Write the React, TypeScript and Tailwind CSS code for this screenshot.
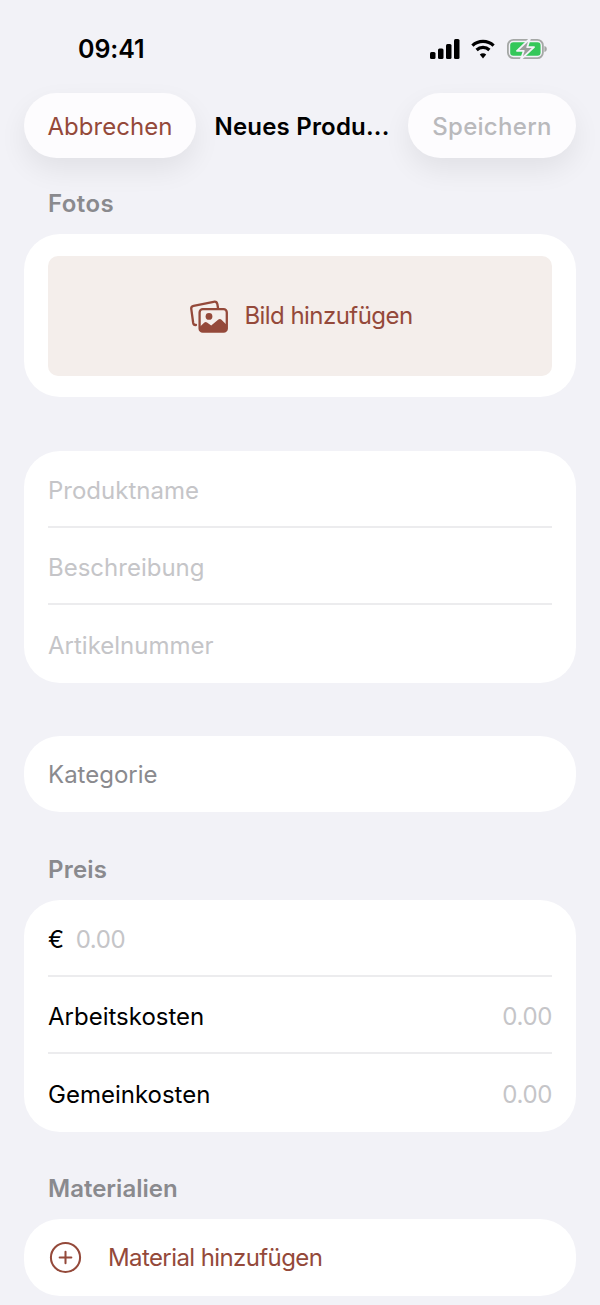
import { CirclePlus } from 'lucide-react';

function PhotosIcon() {
  return (
    <svg width="38" height="33" viewBox="0 0 38 33" fill="none">
      <path d="M6 25 H5.4 C4.2 25 3.4 24.2 3.2 23 L1.3 9.2 C1 7.4 2 6.2 3.6 5.9 L23.6 1.8 C25.6 1.4 27 2.4 27.4 4.2 L28 8" stroke="#94493a" strokeWidth="2.3" strokeLinecap="round" />
      <rect x="9.6" y="9.2" width="27.2" height="22.4" rx="3.2" stroke="#94493a" strokeWidth="2.3" />
      <circle cx="19" cy="16.4" r="3.4" fill="#94493a" />
      <path d="M9.6 27 L14.4 22.6 C15.2 21.8 16.2 21.8 17 22.6 L21.2 25.4 L28.4 19.6 C29.4 18.8 30.4 18.8 31.2 19.6 L36.8 25 V29 C36.8 30.6 35.6 31.6 34.2 31.6 H12.2 C10.6 31.6 9.6 30.6 9.6 29 Z" fill="#94493a" />
    </svg>
  );
}

function StatusIcons() {
  return (
    <div className="flex items-center">
      <svg width="30" height="20" viewBox="0 0 30 20" fill="#000">
        <rect x="0" y="13" width="5.5" height="7" rx="1.5" />
        <rect x="8" y="9.5" width="5.5" height="10.5" rx="1.5" />
        <rect x="16" y="5" width="5.5" height="15" rx="1.5" />
        <rect x="24" y="0" width="5.5" height="20" rx="1.5" />
      </svg>
      <svg className="ml-[11px]" width="24" height="20" viewBox="0 0 24 20" fill="none" stroke="#000" strokeWidth="3.2">
        <path d="M1.4 6.6 C7.4 1 16.6 1 22.6 6.6" />
        <path d="M5.6 11 C9.2 7.6 14.8 7.6 18.4 11" />
        <path d="M12 19.4 L8.8 15.4 C10.6 13.8 13.4 13.8 15.2 15.4 Z" fill="#000" stroke="none" />
      </svg>
      <svg className="ml-[12px]" width="40" height="20" viewBox="0 0 40 20" fill="none">
        <rect x="0.9" y="0.9" width="35" height="18.2" rx="5.5" stroke="#a5a8a6" strokeWidth="1.8" />
        <rect x="3.2" y="3.2" width="30.4" height="13.6" rx="3.2" fill="#34c759" />
        <path d="M37.4 7 C39 7.4 39.8 8.5 39.8 10 C39.8 11.5 39 12.6 37.4 13 Z" fill="#a5a8a6" />
        <path d="M23 -0.5 L10 11.8 H16.8 L13.8 20.5 L27 8.2 H20.2 Z" fill="#9a9d9b" stroke="#f2f2f7" strokeWidth="1.8" strokeLinejoin="round" />
      </svg>
    </div>
  );
}

function Row({ label, value, dark, divider }: { label: string; value?: string; dark?: boolean; divider?: boolean }) {
  return (
    <div className={`flex items-center justify-between pt-[4px] ${divider ? 'h-[77px] border-b-2 border-[#ececee]' : 'h-[78px]'}`}>
      <span className={`text-[24px] ${dark ? 'text-black' : 'text-[#c5c5c8]'}`}>{label}</span>
      {value && <span className="text-[24px] tracking-[-0.35px] text-[#c5c5c8]">{value}</span>}
    </div>
  );
}

function SectionLabel({ children, className }: { children: React.ReactNode; className: string }) {
  return <div className={`px-[24px] text-[24px] leading-[30px] font-semibold text-[#8a8a8e] ${className}`}>{children}</div>;
}

export default function App() {
  return (
    <div className="h-[1305px] w-[600px] overflow-hidden bg-[#f2f2f7] px-[24px] font-['Inter','Liberation_Sans',sans-serif]">
      {/* Status bar */}
      <div className="flex h-[93px] items-start justify-between pt-[33px] pr-[29px] pl-[54px]">
        <span className="text-[25px] leading-[32px] font-semibold tracking-[-0.1px] text-black">09:41</span>
        <div className="pt-[6px]">
          <StatusIcons />
        </div>
      </div>

      {/* Nav */}
      <div className="flex items-center justify-between">
        <div className="flex h-[65px] w-[172px] items-center justify-center rounded-full bg-[#fdfcfe] pt-[2px] text-[24px] tracking-[0.05px] text-[#94493a] shadow-[0_12px_28px_rgba(0,0,0,0.07)]">
          Abbrechen
        </div>
        <span className="pt-[2px] text-[24px] font-semibold tracking-[0.2px] text-black">Neues Produ...</span>
        <div className="flex h-[65px] w-[168px] items-center justify-center rounded-full bg-[#fdfcfe] pt-[2px] text-[24px] font-medium tracking-[0.3px] text-[#b9b9bc] shadow-[0_12px_28px_rgba(0,0,0,0.07)]">
          Speichern
        </div>
      </div>

      <SectionLabel className="mt-[31px] tracking-[0.4px]">Fotos</SectionLabel>

      {/* Photos */}
      <div className="mt-[15px] rounded-[36px] bg-white px-[24px] pt-[22px] pb-[21px]">
        <div className="flex h-[120px] items-center justify-center gap-[16px] rounded-[10px] bg-[#f4eeeb] pl-[3px]">
          <PhotosIcon />
          <span className="text-[24px] tracking-[-0.55px] text-[#94493a]">Bild hinzufügen</span>
        </div>
      </div>

      {/* Product fields */}
      <div className="mt-[54px] rounded-[36px] bg-white px-[24px]">
        <Row label="Produktname" divider />
        <Row label="Beschreibung" divider />
        <Row label="Artikelnummer" />
      </div>

      {/* Category */}
      <div className="mt-[53px] flex h-[76px] items-center rounded-[36px] bg-white px-[24px] pt-[2px]">
        <span className="text-[24px] text-[#8a8a8e]">Kategorie</span>
      </div>

      <SectionLabel className="mt-[43px] tracking-[0.2px]">Preis</SectionLabel>

      {/* Price */}
      <div className="mt-[15px] rounded-[36px] bg-white px-[24px]">
        <div className="flex h-[77px] items-center gap-[12px] border-b-2 border-[#ececee] pt-[4px] text-[24px] tracking-[-0.35px]">
          <span className="text-black">€</span>
          <span className="text-[#c5c5c8]">0.00</span>
        </div>
        <Row label="Arbeitskosten" value="0.00" dark divider />
        <Row label="Gemeinkosten" value="0.00" dark />
      </div>

      <SectionLabel className="mt-[42px]">Materialien</SectionLabel>

      {/* Materials */}
      <div className="mt-[15px] flex h-[77px] items-center gap-[25px] rounded-[36px] bg-white px-[24px]">
        <CirclePlus size={35} strokeWidth={1.4} className="text-[#94493a]" />
        <span className="text-[24px] tracking-[-0.6px] text-[#94493a]">Material hinzufügen</span>
      </div>
    </div>
  );
}
